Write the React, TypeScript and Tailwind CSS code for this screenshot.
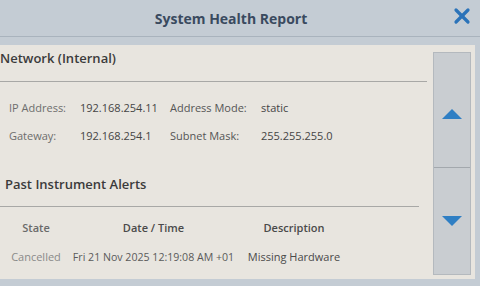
import { X } from 'lucide-react';

const font = { fontFamily: '"Open Sans", "Noto Sans", sans-serif' };

// label/value rows of the network section
const networkRows = [
  { label: 'IP Address:', value: '192.168.254.11', label2: 'Address Mode:', value2: 'static' },
  { label: 'Gateway:', value: '192.168.254.1', label2: 'Subnet Mask:', value2: '255.255.255.0' },
];

export default function App() {
  return (
    <div className="w-[480px] h-[286px] overflow-hidden bg-[#c4ccd4] flex flex-col" style={font}>
      {/* Header */}
      <div className="relative h-[37px] shrink-0 flex items-center justify-center border-b border-[#a9b3bd]">
        <span className="text-[14px] font-bold text-[#3a4a5f] pr-[18px]">System Health Report</span>
        <X className="absolute right-[6px] top-[4px] w-[24px] h-[24px] text-[#2b73b9]" strokeWidth={3.2} />
      </div>

      {/* Panel */}
      <div className="mt-[8px] h-[234px] mr-[5px] bg-[#e8e5df] flex">
        <div className="flex-1 flex flex-col">
          <div className="h-[37px] pt-[4px] border-b border-[#a8a8a6] mr-[6px] text-[13px] font-semibold text-[#3b3b3b] leading-[18px]">
            Network (Internal)
          </div>

          <div className="flex flex-col gap-[10px] pt-[17px] text-[11px] leading-[18px]">
            {networkRows.map((r) => (
              <div key={r.label} className="flex">
                <span className="w-[80px] pl-[9px] text-[#6d6d6d]">{r.label}</span>
                <span className="w-[90px] text-[#444]">{r.value}</span>
                <span className="w-[91px] text-[#555]">{r.label2}</span>
                <span className="text-[#444]">{r.value2}</span>
              </div>
            ))}
          </div>

          <div className="mt-[30px] h-[32px] pl-[5px] border-b border-[#a8a8a6] mr-[14px] text-[13px] font-semibold text-[#3b3b3b] leading-[18px]">
            Past Instrument Alerts
          </div>

          {/* Alerts table */}
          <div className="flex flex-col pt-[12px] text-[11px] leading-[18px]">
            <div className="flex font-semibold text-[#4a4a4a]">
              <span className="w-[62px] pl-[10px] text-center text-[#6a6a6a]">State</span>
              <span className="w-[183px] text-center">Date / Time</span>
              <span className="w-[98px] text-center">Description</span>
            </div>
            <div className="flex mt-[11px]">
              <span className="w-[62px] pl-[10px] text-center text-[#8a8a8a]">Cancelled</span>
              <span className="w-[183px] text-center text-[#5a5a5a] text-[10.6px]">Fri 21 Nov 2025 12:19:08 AM +01</span>
              <span className="w-[98px] text-center text-[#4a4a4a]">Missing Hardware</span>
            </div>
          </div>
        </div>

        {/* Scroll buttons */}
        <div className="w-[38px] mt-[7px] mb-[4px] mr-[4px] flex flex-col border border-[#b4b9be] bg-[#c9cdd1]">
          <div className="flex-1 flex items-center justify-center border-b border-[#a3a8ad] pt-[8px]">
            <svg width="20" height="10" viewBox="0 0 20 10">
              <polygon points="10,0 20,10 0,10" fill="#2f7fc4" />
            </svg>
          </div>
          <div className="flex-1 flex items-center justify-center">
            <svg width="20" height="10" viewBox="0 0 20 10">
              <polygon points="0,0 20,0 10,10" fill="#2f7fc4" />
            </svg>
          </div>
        </div>
      </div>
    </div>
  );
}
